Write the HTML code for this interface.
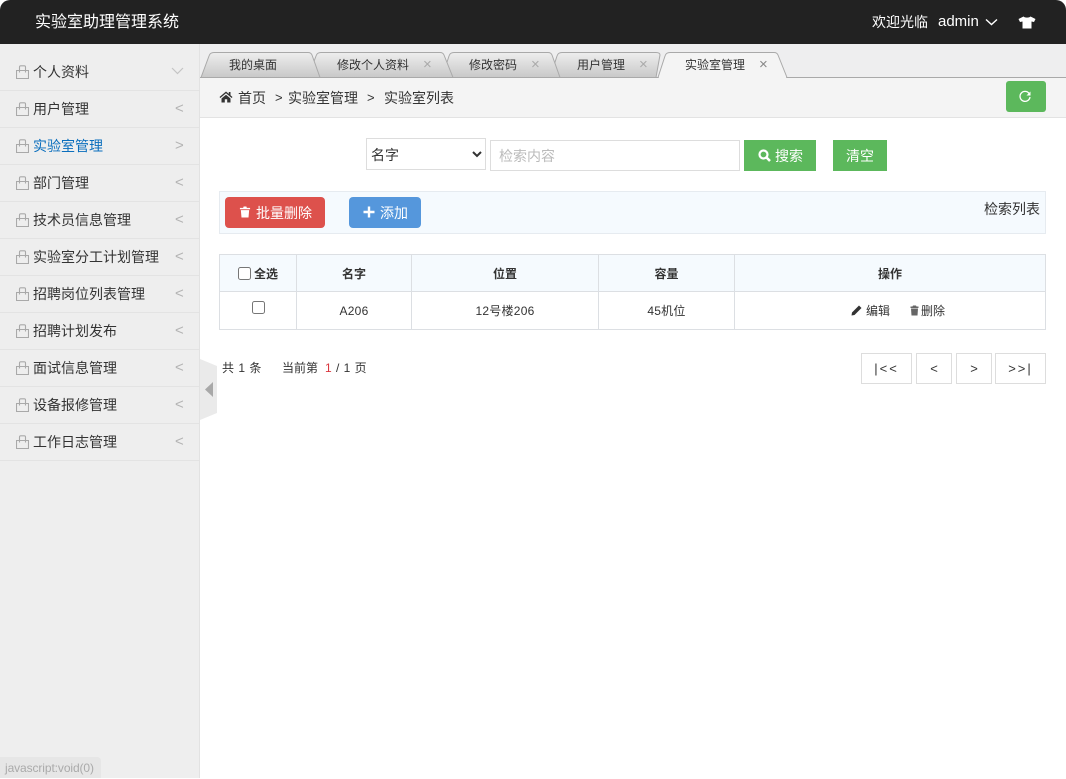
<!DOCTYPE html>
<html lang="zh-CN"><head><meta charset="utf-8"><title>实验室助理管理系统</title>
<style>
*{box-sizing:border-box}
html,body{margin:0;padding:0;background:#fff}
body{width:1066px;height:778px;overflow:hidden;position:relative;font-family:"Liberation Sans","Noto Sans CJK SC",sans-serif;color:#333;font-size:14px}
.a{position:absolute;white-space:nowrap}
#top{left:0;top:0;width:1066px;height:44px;background:#222;border-radius:10px 10px 0 0}
#main{left:200px;top:44px;width:866px;height:734px;background:#fff}
#side{left:0;top:44px;width:200px;height:734px;background:#eee;border-right:1px solid #e2e2e2}
.mi{position:absolute;left:0;width:199px;height:37px;border-bottom:1px solid #e3e3e3}
.mi span{position:absolute;left:33px;top:10px;line-height:16px;font-size:14px;color:#333}
.mi svg.b{position:absolute;left:16px;top:11px}
.mi i{position:absolute;left:175px;top:9px;font-style:normal;font-size:15px;line-height:18px;color:#b4b4b4}
.tt{font-size:12px;line-height:14px;top:58px;color:#333}
.x{font-size:15px;line-height:14px;top:58px;color:#aaa}
.btn{color:#fff;text-align:center;font-size:14px}
th,td{border:1px solid #dcdfe3;padding:0;text-align:center;font-size:12px;color:#333;font-weight:400}
th{background:#f5fafe;font-weight:700}
td{letter-spacing:.25px}
.pg{top:353px;height:31px;border:1px solid #ddd;background:#fff;font-size:14px;line-height:29px;text-align:center;color:#333}
</style></head><body>
<svg width="0" height="0" style="position:absolute"><symbol id="bag" viewBox="0 0 13 14"><path d="M.5 5.500H12.500V13.500H.5ZM3.500 7.500V2Q3.500 .8 4.700 .8H8.300Q9.500 .8 9.500 2V7.500" fill="none" stroke="#a9a9a9" stroke-width="1.100"/></symbol></svg>
<div class="a" id="top"></div>
<div class="a" style="left:35px;top:13px;font-size:16px;line-height:20px;color:#fff">实验室助理管理系统</div>
<div class="a" style="left:872px;top:13px;font-size:14px;line-height:18px;color:#fff">欢迎光临</div>
<div class="a" style="left:938px;top:13px;font-size:15px;line-height:18px;color:#fff">admin</div>
<svg class="a" style="left:985px;top:18px" width="13" height="8" viewBox="0 0 13 8"><path d="M1 1.500L6.500 6.500L12 1.500" fill="none" stroke="#fff" stroke-width="1.400"/></svg>
<svg class="a" style="left:1018px;top:16px" width="18" height="13" viewBox="0 0 18 13"><path d="M5.500 0.500L0.500 3L2 6L4.500 5.500V12.500H13.500V5.500L16 6L17.500 3L12.500 0.500C11 2 7 2 5.500 0.500Z" fill="#fff"/></svg>

<div class="a" id="main"></div>
<div class="a" id="side">
<div class="mi" style="top:10px"><svg class="b" width="13" height="14"><use href="#bag"/></svg><span>个人资料</span><svg style="position:absolute;left:171px;top:13px" width="13" height="8" viewBox="0 0 13 8"><path d="M1 1L6.500 6.500L12 1" fill="none" stroke="#c4c4c4" stroke-width="1.200"/></svg></div>
<div class="mi" style="top:47px"><svg class="b" width="13" height="14"><use href="#bag"/></svg><span>用户管理</span><i>&lt;</i></div>
<div class="mi" style="top:84px"><svg class="b" width="13" height="14"><use href="#bag"/></svg><span style="color:#0a6ebd">实验室管理</span><i>&gt;</i></div>
<div class="mi" style="top:121px"><svg class="b" width="13" height="14"><use href="#bag"/></svg><span>部门管理</span><i>&lt;</i></div>
<div class="mi" style="top:158px"><svg class="b" width="13" height="14"><use href="#bag"/></svg><span>技术员信息管理</span><i>&lt;</i></div>
<div class="mi" style="top:195px"><svg class="b" width="13" height="14"><use href="#bag"/></svg><span>实验室分工计划管理</span><i>&lt;</i></div>
<div class="mi" style="top:232px"><svg class="b" width="13" height="14"><use href="#bag"/></svg><span>招聘岗位列表管理</span><i>&lt;</i></div>
<div class="mi" style="top:269px"><svg class="b" width="13" height="14"><use href="#bag"/></svg><span>招聘计划发布</span><i>&lt;</i></div>
<div class="mi" style="top:306px"><svg class="b" width="13" height="14"><use href="#bag"/></svg><span>面试信息管理</span><i>&lt;</i></div>
<div class="mi" style="top:343px"><svg class="b" width="13" height="14"><use href="#bag"/></svg><span>设备报修管理</span><i>&lt;</i></div>
<div class="mi" style="top:380px"><svg class="b" width="13" height="14"><use href="#bag"/></svg><span>工作日志管理</span><i>&lt;</i></div>
</div>

<!-- tab strip -->
<div class="a" style="left:200px;top:44px;width:866px;height:34px;background:#eeeeef"></div>
<div class="a" style="left:200px;top:78px;width:866px;height:40px;background:#f4f4f4;border-bottom:1px solid #e3e3e3"></div>
<svg class="a" style="left:200px;top:44px" width="866" height="34" viewBox="0 0 866 34">
<defs><linearGradient id="g" x1="0" y1="0" x2="0" y2="1"><stop offset="0" stop-color="#eeeeee"/><stop offset="1" stop-color="#c8c8c8"/></linearGradient></defs>
<path d="M0 33.500H866" stroke="#a9a9a9" fill="none"/>
<path d="M350 33.500L357 12Q358 8.500 362 8.500H456Q460 8.500 460 11L456 33.500Z" fill="url(#g)" stroke="#a9a9a9"/>
<path d="M242 33.500L249 12Q250 8.500 254 8.500H348Q351 8.500 352 11L360 33.500Z" fill="url(#g)" stroke="#a9a9a9"/>
<path d="M108 33.500L116 12Q117 8.500 121 8.500H240Q243 8.500 244 11L253 33.500Z" fill="url(#g)" stroke="#a9a9a9"/>
<path d="M1 33.500L9 12Q10 8.500 14 8.500H108Q111 8.500 112 11L120 33.500Z" fill="url(#g)" stroke="#a9a9a9"/>
<path d="M458 33.500L465 12Q466 8.500 470 8.500H574Q577 8.500 578 11L587 33.500" fill="#f4f4f4" stroke="#a9a9a9"/>
<path d="M459 33.500H586" stroke="#f4f4f4" fill="none" stroke-width="1.500"/>
</svg>
<div class="a tt" style="left:229px">我的桌面</div>
<div class="a tt" style="left:337px">修改个人资料</div><div class="a x" style="left:423px">×</div>
<div class="a tt" style="left:469px">修改密码</div><div class="a x" style="left:531px">×</div>
<div class="a tt" style="left:577px">用户管理</div><div class="a x" style="left:639px">×</div>
<div class="a tt" style="left:685px">实验室管理</div><div class="a x" style="left:759px;color:#888">×</div>

<!-- breadcrumb -->
<svg class="a" style="left:219px;top:91px" width="14" height="12" viewBox="0 0 14 12"><path d="M7 0.500L0.500 6L1.300 7L7 2.300L12.700 7L13.500 6L11.500 4.300V1H9.800V2.900ZM2.500 7.500V11.500H5.800V8.300H8.200V11.500H11.500V7.500L7 3.800Z" fill="#333"/></svg>
<div class="a" style="left:238px;top:90px;font-size:14px;line-height:16px">首页</div>
<div class="a" style="left:275px;top:90px;font-size:13px;line-height:16px">&gt;</div>
<div class="a" style="left:288px;top:90px;font-size:14px;line-height:16px">实验室管理</div>
<div class="a" style="left:367px;top:90px;font-size:13px;line-height:16px">&gt;</div>
<div class="a" style="left:384px;top:90px;font-size:14px;line-height:16px">实验室列表</div>
<div class="a" style="left:1006px;top:81px;width:40px;height:31px;background:#5cb85c;border-radius:3px"></div>
<svg class="a" style="left:1018px;top:90px" width="14" height="14" viewBox="0 0 14 14"><path d="M11 3.300A5 5 0 1 0 12 7" fill="none" stroke="#fff" stroke-width="1.300"/><path d="M12.500 1.500V5.500H8.500Z" fill="#fff"/></svg>

<!-- search -->
<select class="a" style="left:366px;top:138px;width:120px;height:32px;background:#fff;border:1px solid #ddd;font-family:inherit;font-size:14px;color:#333;padding:2px 0 0 0;outline:none"><option>名字</option></select>
<div class="a" style="left:490px;top:140px;width:250px;height:31px;border:1px solid #ddd;background:#fff;padding-left:8px;line-height:30px;font-size:14px;color:#bbb">检索内容</div>
<div class="a btn" style="left:744px;top:140px;width:72px;height:31px;background:#5cb85c;line-height:32px;padding-left:31px;text-align:left">搜索<svg class="a" style="left:14px;top:9px" width="13" height="13" viewBox="0 0 13 13"><circle cx="5.500" cy="5.500" r="4" fill="none" stroke="#fff" stroke-width="2.200"/><path d="M8.500 8.500L12 12" stroke="#fff" stroke-width="2.600"/></svg></div>
<div class="a btn" style="left:833px;top:140px;width:54px;height:31px;background:#5cb85c;line-height:32px">清空</div>

<!-- toolbar -->
<div class="a" style="left:219px;top:191px;width:827px;height:43px;background:#f5fafe;border:1px solid #e6ebf0"></div>
<div class="a btn" style="left:225px;top:197px;width:100px;height:31px;background:#dd514c;border-radius:4px;line-height:32px;padding-left:31px;text-align:left">批量删除<svg class="a" style="left:14px;top:9px" width="12" height="12" viewBox="0 0 12 13"><path d="M4.500 0.500H7.500L8 2H11.500V3.500H0.500V2H4ZM1.500 4.500H10.500L9.800 12.500H2.200Z" fill="#fff"/></svg></div>
<div class="a btn" style="left:349px;top:197px;width:72px;height:31px;background:#5597dc;border-radius:4px;line-height:32px;padding-left:31px;text-align:left">添加<svg class="a" style="left:14px;top:9px" width="12" height="12" viewBox="0 0 12 12"><path d="M6 0.500V11.500M0.500 6H11.500" stroke="#fff" stroke-width="2.400"/></svg></div>
<div class="a" style="left:984px;top:201px;font-size:14px;line-height:16px;color:#333">检索列表</div>

<!-- table -->
<table class="a" style="left:219px;top:254px;width:827px;height:76px;border-collapse:collapse;table-layout:fixed;background:#fff">
<colgroup><col style="width:77px"><col style="width:115px"><col style="width:187px"><col style="width:136px"><col></colgroup>
<tr style="height:37px"><th><input type="checkbox" style="margin:0 3px 0 0;width:13px;height:13px;vertical-align:-2px">全选</th><th>名字</th><th>位置</th><th>容量</th><th>操作</th></tr>
<tr style="height:38px"><td><input type="checkbox" style="margin:0;width:13px;height:13px;position:relative;top:-2px"></td><td>A206</td><td>12号楼206</td><td>45机位</td><td></td></tr>
</table>
<svg class="a" style="left:851px;top:305px" width="11" height="11" viewBox="0 0 11 11"><path d="M8 .5L10.500 3L3.500 10L.5 10.500L1 7.500Z" fill="#333"/></svg>
<div class="a" style="left:866px;top:304px;font-size:12px;line-height:15px">编辑</div>
<svg class="a" style="left:910px;top:305px" width="9" height="11" viewBox="0 0 9 11"><path d="M3 .5H6L6.500 1.500H8.500V3H.5V1.500H2.500ZM1 3.500H8L7.500 10.500H1.500Z" fill="#666"/></svg>
<div class="a" style="left:921px;top:304px;font-size:12px;line-height:15px">删除</div>

<!-- pager -->
<div class="a" style="left:222px;top:361px;font-size:12px;line-height:15px;word-spacing:1px">共 1 条</div>
<div class="a" style="left:282px;top:361px;font-size:12px;line-height:15px">当前第</div>
<div class="a" style="left:325px;top:361px;font-size:12px;line-height:15px;color:#d9363e">1</div>
<div class="a" style="left:336px;top:361px;font-size:12px;line-height:15px;word-spacing:1px">/ 1 页</div>
<div class="a pg" style="left:861px;width:51px;letter-spacing:2px;font-size:13px">|&lt;&lt;</div>
<div class="a pg" style="left:916px;width:36px;font-size:13px">&lt;</div>
<div class="a pg" style="left:956px;width:36px;font-size:13px">&gt;</div>
<div class="a pg" style="left:995px;width:51px;letter-spacing:2px;font-size:13px">&gt;&gt;|</div>

<!-- collapse handle -->
<svg class="a" style="left:200px;top:359px" width="18" height="62" viewBox="0 0 18 62"><path d="M0 0L17 7V54L0 61Z" fill="#eaeaea"/><path d="M13 23V38L5 30.500Z" fill="#a8a8a8"/></svg>

<!-- status bar -->
<div class="a" style="left:0;top:757px;width:101px;height:21px;background:#e6e6e6;border-top-right-radius:4px;font-size:12px;line-height:22px;padding-left:5px;color:#aaa;letter-spacing:-.1px">javascript:void(0)</div>
</body></html>
